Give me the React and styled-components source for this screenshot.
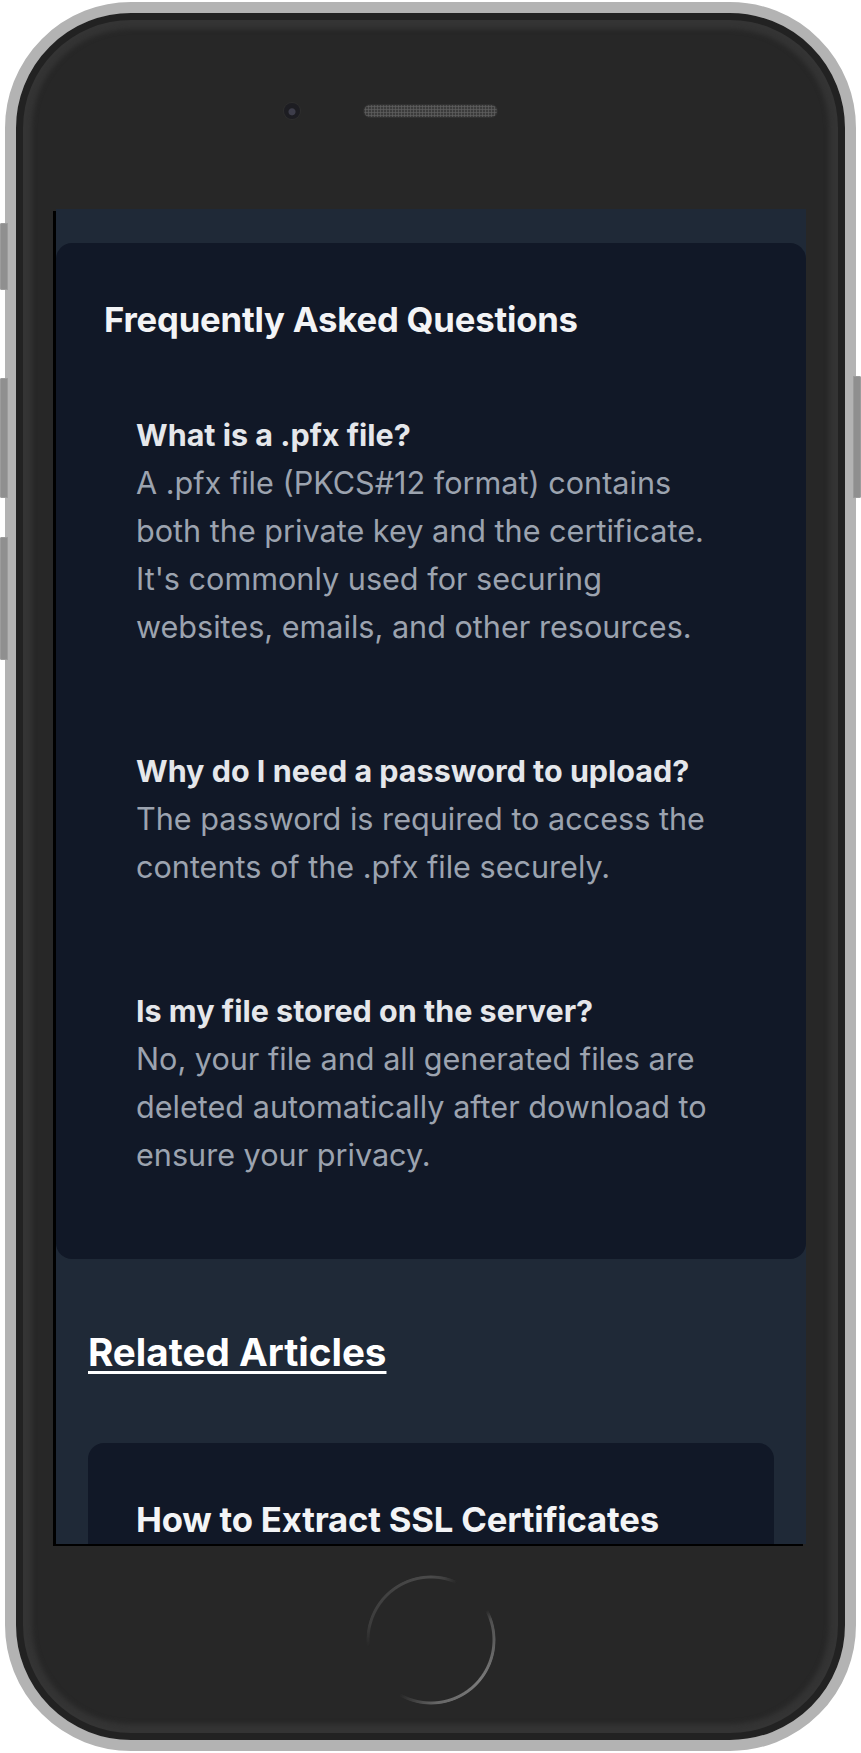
import React from "react";
import styled, {createGlobalStyle} from "styled-components";

const GlobalStyle = createGlobalStyle`
  html, body {
    margin: 0;
    padding: 0;
    background: #ffffff;
  }
  * {
    box-sizing: border-box;
  }
`;

const Stage = styled.div`
  position: relative;
  width: 861px;
  height: 1753px;
  padding: 2px 5px 2px 5px;
  font-family: "Inter", "Noto Sans", sans-serif;
`;

const Phone = styled.div`
  width: 851px;
  height: 1749px;
  border: 11px solid #b3b3b3;
  border-radius: 126px;
  background: #272727;
  box-shadow: inset 0 0 0 7px #222222, inset 0 0 5px 16px #343434;
  display: flex;
  flex-direction: column;
  overflow: hidden;
`;

const SideButton = styled.div`
  position: absolute;
  width: 8px;
  top: ${({top}) => top}px;
  height: ${({h}) => h}px;
  ${({right}) => right ? "right: 0;" : "left: 0;"}
  background: #8f8f8f;
  border-radius: ${({right}) => right ? "0 2px 2px 0" : "2px 0 0 2px"};
  box-shadow: inset 0 0 0 1px #9c9c9c;
`;

const TopBezel = styled.div`
  height: 196px;
  display: grid;
  grid-template-columns: 1fr auto 1fr;
  align-items: center;
`;

const Camera = styled.div`
  justify-self: end;
  margin-right: 64px;
  width: 16px;
  height: 16px;
  border-radius: 50%;
  background: radial-gradient(circle at 50% 55%, #3d3d4a 0 3px, #1d1d22 4px);
  box-shadow: 0 0 0 1px #2e2e2e;
`;

const Speaker = styled.div`
  width: 133px;
  height: 12px;
  border-radius: 6px;
  background-color: #3b3b3b;
  background-image: radial-gradient(#5c5c5c 0.9px, transparent 1.3px);
  background-size: 3px 3px;
  box-shadow: 0 0 0 1px #303030;
`;

const Screen = styled.div`
  margin: 0 39px 0 40px;
  height: 1335px;
  background: #1f2937;
  overflow: hidden;
  box-shadow: -3px 2px 0 #000000;
  padding-top: 34px;
`;

const FaqCard = styled.section`
  background: #111827;
  border-radius: 16px;
  padding: 48px;
`;

const CardTitle = styled.h2`
  margin: 0 0 32px;
  font-size: 34.7px;
  line-height: 56px;
  font-weight: 700;
  color: #f3f4f6;
  letter-spacing: -0.2px;
`;

const FaqList = styled.div`
  display: flex;
  flex-direction: column;
  gap: 32px;
`;

const FaqItem = styled.div`
  padding: 32px;
`;

const Question = styled.h3`
  margin: 0;
  font-size: 30.5px;
  line-height: 48px;
  font-weight: 700;
  color: #e5e7eb;
`;

const Answer = styled.p`
  margin: 0;
  font-size: 30.6px;
  line-height: 48px;
  font-weight: 400;
  color: #9ca3af;
`;

const Related = styled.section`
  padding: 64px 32px 0;
`;

const RelatedTitle = styled.h2`
  margin: 0 0 62px;
  font-size: 38.6px;
  line-height: 58px;
  font-weight: 700;
  color: #ffffff;
  text-decoration: underline;
  text-decoration-thickness: 3px;
  text-underline-offset: 5px;
`;

const ArticleCard = styled.a`
  display: block;
  background: #111827;
  border-radius: 16px;
  padding: 48px;
  text-decoration: none;
`;

const BottomBezel = styled.div`
  flex: 1;
  display: flex;
  align-items: center;
  justify-content: center;
  padding-bottom: 4px;
`;

const HomeButton = styled.div`
  width: 130px;
  height: 130px;
  border-radius: 50%;
  background: conic-gradient(
    #4a4a4a 0deg,
    #404040 12deg,
    transparent 24deg,
    transparent 62deg,
    #505050 72deg,
    #7a7a7a 130deg,
    #666666 175deg,
    transparent 210deg,
    transparent 264deg,
    #3c3c3c 284deg,
    #4a4a4a 360deg
  );
  -webkit-mask: radial-gradient(circle, transparent 61px, #000 62px, #000 64px, transparent 65px);
  mask: radial-gradient(circle, transparent 61px, #000 62px, #000 64px, transparent 65px);
`;

const faqs = [
    {
        q: "What is a .pfx file?",
        a: "A .pfx file (PKCS#12 format) contains both the private key and the certificate. It's commonly used for securing websites, emails, and other resources."
    },
    {
        q: "Why do I need a password to upload?",
        a: "The password is required to access the contents of the .pfx file securely."
    },
    {
        q: "Is my file stored on the server?",
        a: "No, your file and all generated files are deleted automatically after download to ensure your privacy."
    }
];

const App = () => {
    return (
        <Stage>
            <GlobalStyle/>
            <SideButton top={223} h={67}/>
            <SideButton top={378} h={120}/>
            <SideButton top={537} h={123}/>
            <SideButton right top={376} h={122}/>
            <Phone>
                <TopBezel>
                    <Camera/>
                    <Speaker/>
                </TopBezel>
                <Screen>
                    <FaqCard>
                        <CardTitle>Frequently Asked Questions</CardTitle>
                        <FaqList>
                            {faqs.map(item => (
                                <FaqItem key={item.q}>
                                    <Question>{item.q}</Question>
                                    <Answer>{item.a}</Answer>
                                </FaqItem>
                            ))}
                        </FaqList>
                    </FaqCard>
                    <Related>
                        <RelatedTitle>Related Articles</RelatedTitle>
                        <ArticleCard href="#">
                            <CardTitle>How to Extract SSL Certificates</CardTitle>
                        </ArticleCard>
                    </Related>
                </Screen>
                <BottomBezel>
                    <HomeButton/>
                </BottomBezel>
            </Phone>
        </Stage>
    );
};

export default App;
